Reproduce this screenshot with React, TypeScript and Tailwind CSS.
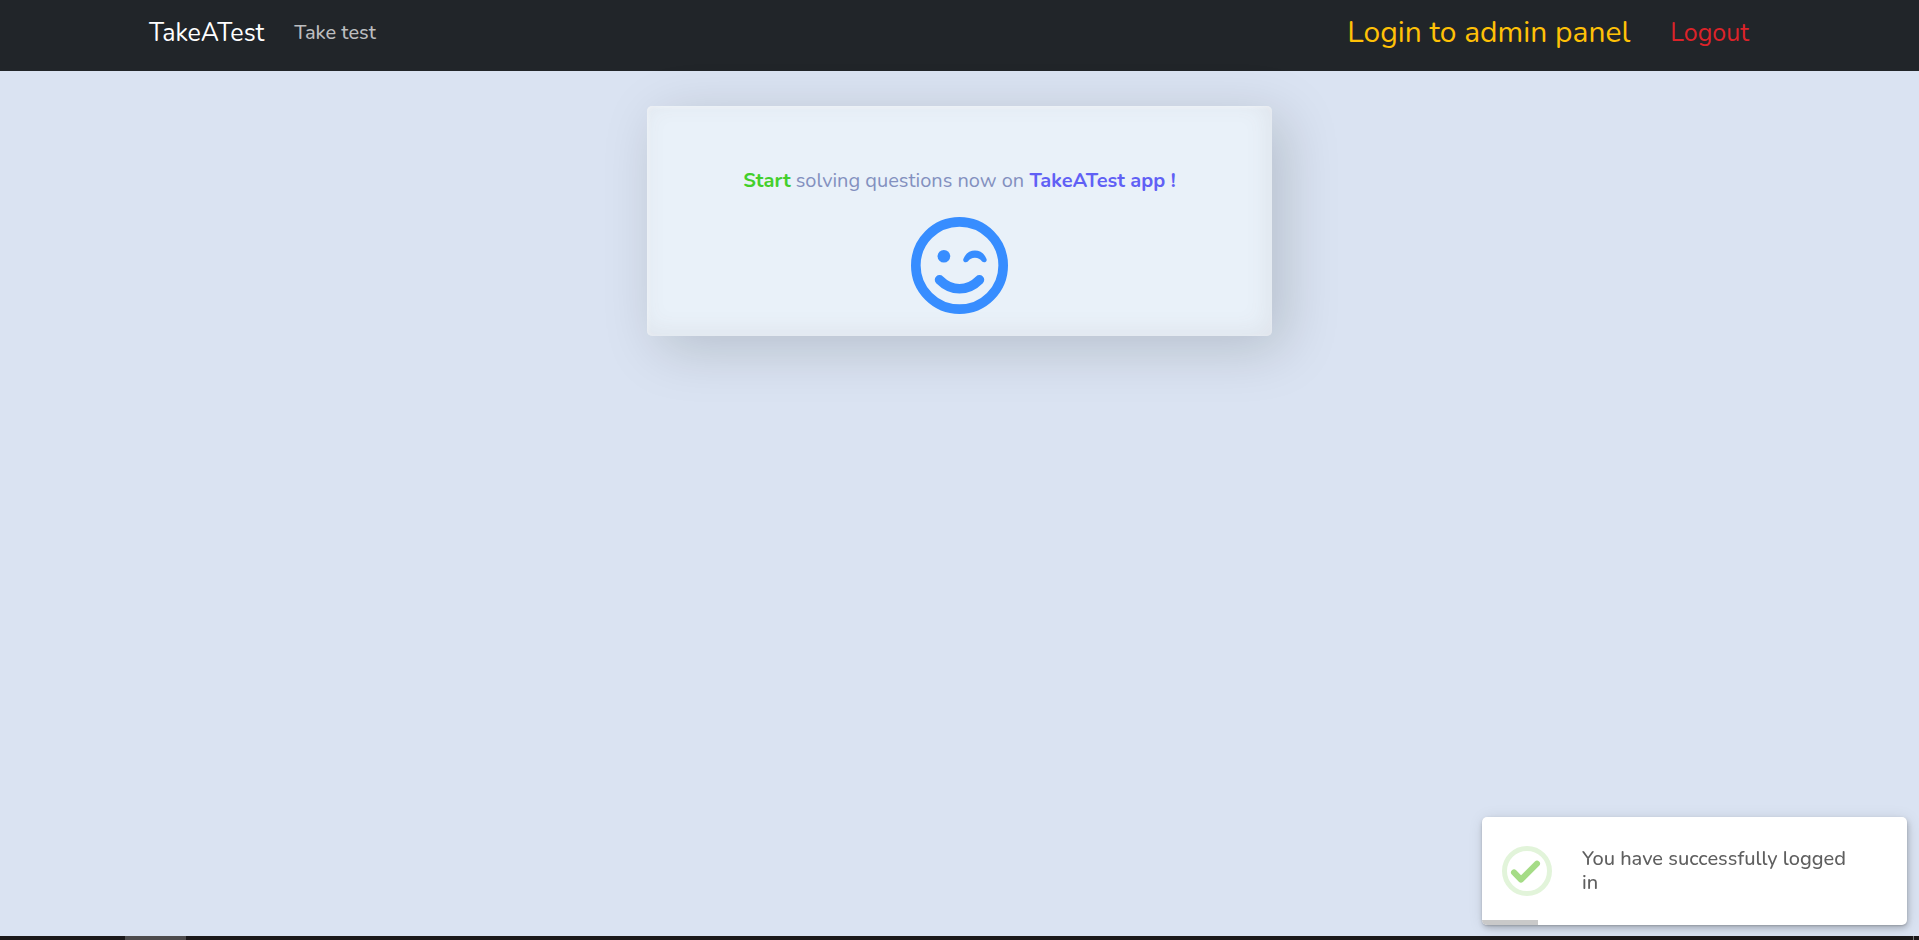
function WinkFace() {
  return (
    <svg viewBox="0 0 292 292" className="size-[97px]" fill="#378dff" role="img" aria-label="Winking face">
      <circle cx="146" cy="146" r="131.5" fill="none" stroke="#378dff" strokeWidth="29" />
      <circle cx="99" cy="118" r="19" />
      <path d="M158 126C164 109 178 101 192.500 101S221 109 227 126C231 134 220 140 214 134C208 127 202 123 192.500 123S177 127 171 134C165 140 154 134 158 126Z" />
      <path d="M86 189C104 207 124 216 146 216S188 207 206 189" fill="none" stroke="#378dff" strokeWidth="29" strokeLinecap="round" />
    </svg>
  );
}

function SuccessIcon() {
  return (
    <svg viewBox="0 0 150 150" className="size-[50px] shrink-0" fill="none" aria-hidden="true">
      <circle cx="75" cy="75" r="67.5" stroke="#e2f4da" strokeWidth="15" />
      <path d="M36 79L57 101L105 53" stroke="#a5dc86" strokeWidth="18" strokeLinecap="round" strokeLinejoin="round" />
    </svg>
  );
}

export default function App() {
  return (
    <div className="flex min-h-screen flex-col bg-[#dae3f2] font-['Nunito','Noto_Sans',sans-serif]">
      <header className="bg-[#212529] pr-[170px] pl-[149px]">
        <nav className="flex h-[71px] items-start pt-2 leading-[50px]">
          <a href="#home" className="text-[25px] text-white">TakeATest</a>
          <a href="#test" className="ml-[30px] text-xl leading-[50px] font-medium text-[#bcbdbf]">Take test</a>
          <a href="#admin" className="ml-auto text-3xl leading-[50px] text-[#ffc107]">Login to admin panel</a>
          <a href="#logout" className="ml-10 text-[25px] text-[#dc2329]">Logout</a>
        </nav>
      </header>

      <main className="flex flex-1 flex-col items-center px-4 pt-[35px]">
        <section className="flex w-full max-w-[625px] flex-col items-center rounded-[5px] bg-[#e9f1f9] px-6 pt-[60px] pb-[22px] shadow-[12px_12px_56px_rgba(0,20,10,0.17),inset_-4px_-4px_24px_rgba(100,80,80,0.08),inset_1px_1px_4px_rgba(255,255,255,0.6)]">
          <p className="text-xl leading-[30px] text-[#8390bf]">
            <b className="font-bold text-[#43cf2b]">Start</b> solving questions now on{" "}
            <b className="font-bold text-[#6060f5]">TakeATest app !</b>
          </p>
          <div className="mt-[21px]">
            <WinkFace />
          </div>
        </section>
      </main>

      <div role="status" className="fixed right-3 bottom-[15px] flex h-[108px] w-[425px] items-center overflow-hidden rounded-[5px] bg-white pl-5 shadow-[0_1px_2px_rgba(0,0,0,0.15),1px_3px_6px_rgba(0,0,0,0.2),1px_2px_16px_rgba(0,0,0,0.1)]">
        <SuccessIcon />
        <p className="ml-[30px] w-[275px] text-xl leading-6 font-medium text-[#5f5f5f]">You have successfully logged in</p>
        <div className="absolute bottom-0 left-0 h-[5px] w-14 bg-[#c9c9c9]" />
      </div>

      <footer className="flex h-1 bg-[#1b191a] pl-[125px]">
        <div className="w-[61px] bg-[#4d4b4c]" />
        <div className="mr-[5px] ml-auto w-px bg-[#77797b]" />
      </footer>
    </div>
  );
}
